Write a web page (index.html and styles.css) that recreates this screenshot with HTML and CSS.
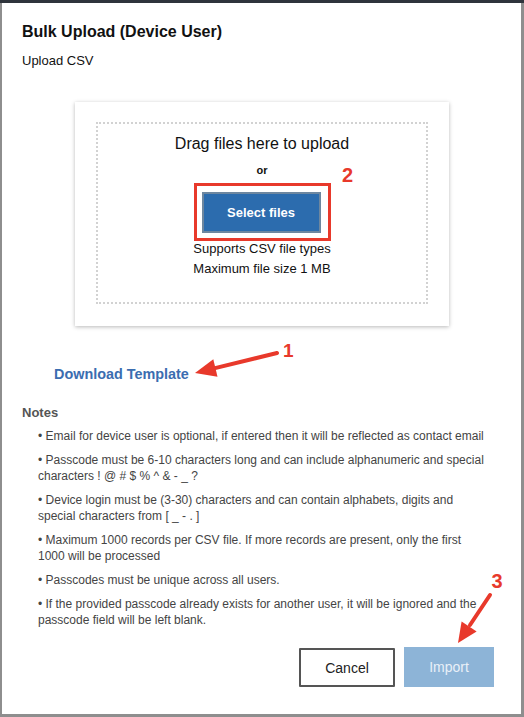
FILE: index.html
```html
<!DOCTYPE html>
<html lang="en">
<head>
<meta charset="utf-8">
<title>Bulk Upload (Device User)</title>
<link rel="stylesheet" href="styles.css">
</head>
<body>
<div class="dialog">
  <h1 class="title">Bulk Upload (Device User)</h1>
  <p class="sub">Upload CSV</p>
  <div class="card">
    <div class="drop">
      <div class="drag-text">Drag files here to upload</div>
      <div class="or">or</div>
      <div class="highlight">
        <button class="select-btn" type="button">Select files</button>
      </div>
      <div class="info">
        <div>Supports CSV file types</div>
        <div>Maximum file size 1 MB</div>
      </div>
    </div>
  </div>
  <a class="download" href="#">Download Template</a>
  <h2 class="notes-title">Notes</h2>
  <div class="notes">
    <p>• Email for device user is optional, if entered then it will be reflected as contact email</p>
    <p>• Passcode must be 6-10 characters long and can include alphanumeric and special characters ! @ # $ % ^ &amp; - _ ?</p>
    <p>• Device login must be (3-30) characters and can contain alphabets, digits and special characters from [ _ - . ]</p>
    <p>• Maximum 1000 records per CSV file. If more records are present, only the first 1000 will be processed</p>
    <p>• Passcodes must be unique across all users.</p>
    <p>• If the provided passcode already exists for another user, it will be ignored and the passcode field will be left blank.</p>
  </div>
  <div class="actions">
    <button class="btn-cancel" type="button">Cancel</button>
    <button class="btn-import" type="button" disabled>Import</button>
  </div>
</div>
<svg class="annotations" width="524" height="717" viewBox="0 0 524 717" aria-hidden="true">
  <g fill="#e8392b" stroke="none">
    <line x1="277" y1="353" x2="214" y2="368.4" stroke="#e8392b" stroke-width="4" stroke-linecap="round"/>
    <polygon points="195,373 213.3,359.3 217.5,376.7"/>
    <line x1="490" y1="595" x2="470" y2="625" stroke="#e8392b" stroke-width="4" stroke-linecap="round"/>
    <polygon points="458,643 461.6,621.4 476.6,631.4"/>
    <text x="342" y="182" class="num">2</text>
    <text x="283" y="357" class="num num-sm">1</text>
    <text x="491.5" y="587.5" class="num">3</text>
  </g>
</svg>
</body>
</html>
```
FILE: styles.css
```css
* { box-sizing: border-box; }

html, body {
  margin: 0;
  padding: 0;
}

body {
  width: 524px;
  height: 717px;
  overflow: hidden;
  position: relative;
  background: linear-gradient(#2f343c 0, #2f343c 3px, #8e8e8e 3px);
  font-family: "Liberation Sans", Arial, sans-serif;
  color: #222;
}

.dialog {
  margin: 3px 3px 3px 2px;
  height: 711px;
  background: #fff;
  padding: 18px 36px 27px 20px;
  display: flex;
  flex-direction: column;
}

.title {
  margin: 0;
  font-size: 16px;
  line-height: 22px;
  font-weight: bold;
  color: #111;
}

.sub {
  margin: 10px 0 0;
  font-size: 13px;
  line-height: 16px;
  color: #111;
}

.card {
  margin: 33px 0 0 53px;
  width: 374px;
  background: #fff;
  box-shadow: 0 1px 4px rgba(0, 0, 0, 0.28);
  padding: 20px 21px 22px;
}

.drop {
  border: 2px dotted #d2d2d2;
  padding: 10px 0 23px;
  display: flex;
  flex-direction: column;
  align-items: center;
  text-align: center;
}

.drag-text {
  font-size: 16px;
  line-height: 20px;
  color: #111;
}

.or {
  margin-top: 9px;
  font-size: 11px;
  line-height: 14px;
  font-weight: bold;
  color: #111;
}

.highlight {
  margin-top: 6px;
  border: 3px solid #e8392b;
  padding: 6px 7px 5px 5px;
}

.select-btn {
  display: block;
  width: 119px;
  height: 41px;
  background: #2c6cae;
  border: 2px solid #6d87a0;
  color: #fff;
  font-family: inherit;
  font-size: 13px;
  font-weight: bold;
  padding: 0;
}

.info {
  margin-top: -2px;
  font-size: 13px;
  line-height: 20px;
  color: #111;
}

.download {
  align-self: flex-start;
  margin: 39px 0 0 32px;
  font-size: 14.4px;
  line-height: 18px;
  font-weight: bold;
  color: #3b6db0;
  text-decoration: none;
}

.notes-title {
  margin: 22px 0 0;
  font-size: 13px;
  line-height: 16px;
  font-weight: bold;
  color: #555;
}

.notes {
  margin-top: 7px;
  padding-left: 16px;
}

.notes p {
  margin: 0 0 8px;
  font-size: 12px;
  line-height: 16px;
  color: #444;
}

.actions {
  margin-top: auto;
  margin-right: -9px;
  display: flex;
  justify-content: flex-end;
  align-items: flex-end;
  gap: 9px;
}

.btn-cancel {
  width: 96px;
  height: 39px;
  background: #fff;
  border: 2px solid #555;
  border-radius: 1px;
  font-family: inherit;
  font-size: 14px;
  color: #222;
  padding: 0;
}

.btn-import {
  width: 90px;
  height: 40px;
  background: #8db4d7;
  border: none;
  font-family: inherit;
  font-size: 14px;
  color: #e9f0f7;
  padding: 0;
}

.annotations {
  position: absolute;
  left: 0;
  top: 0;
  pointer-events: none;
}

.num {
  font-family: "Liberation Sans", Arial, sans-serif;
  font-weight: bold;
  font-size: 20px;
}

.num-sm {
  font-size: 19px;
}
```
